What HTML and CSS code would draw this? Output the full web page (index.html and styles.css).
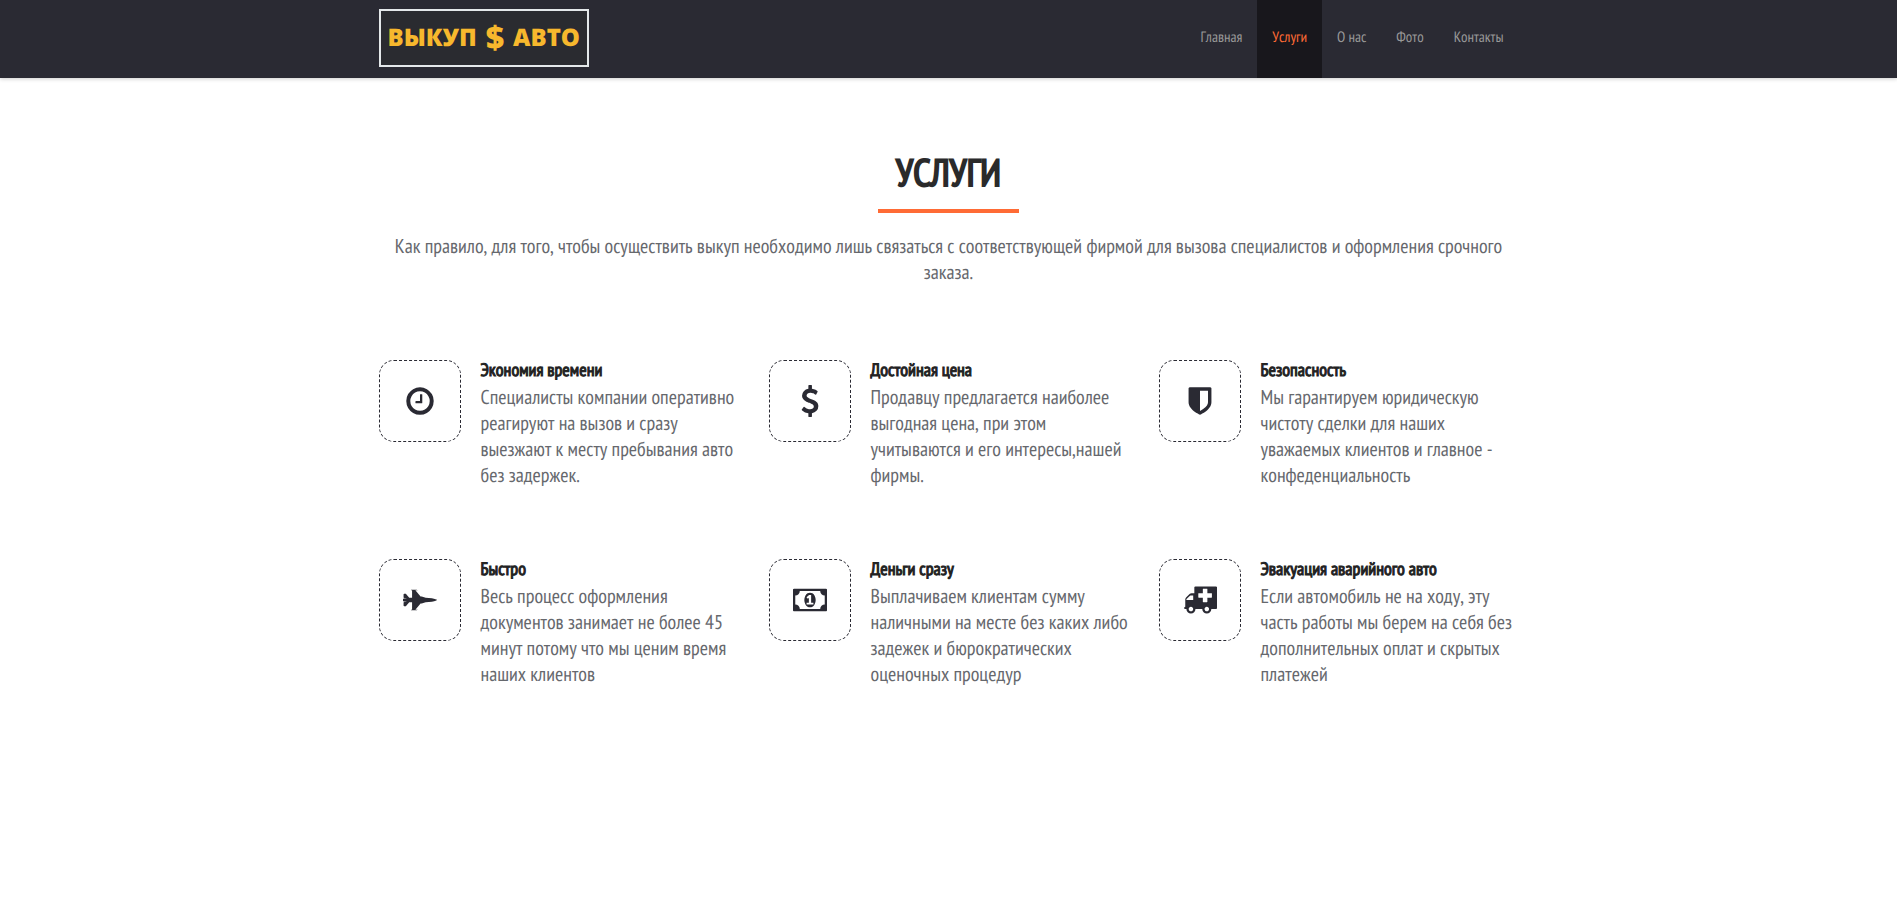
FILE: index.html
```html
<!DOCTYPE html>
<html lang="ru">
<head>
<meta charset="utf-8">
<meta name="viewport" content="width=device-width, initial-scale=1">
<title>Выкуп авто — Услуги</title>
<link rel="stylesheet" href="styles.css">
</head>
<body>
<header class="header">
  <div class="container header-inner">
    <a class="logo" href="#"><span>ВЫКУП</span><span class="logo-sign">$</span><span>АВТО</span></a>
    <nav class="nav">
      <a class="nav-link" href="#">Главная</a>
      <a class="nav-link active" href="#" aria-current="page">Услуги</a>
      <a class="nav-link" href="#">О нас</a>
      <a class="nav-link" href="#">Фото</a>
      <a class="nav-link" href="#">Контакты</a>
    </nav>
  </div>
</header>
<main class="container services">
  <h1 class="title">УСЛУГИ</h1>
  <p class="intro">Как правило, для того, чтобы осуществить выкуп необходимо лишь связаться с соответствующей фирмой для вызова специалистов и оформления срочного заказа.</p>
  <div class="grid">
    <article class="card">
      <div class="tile"><svg class="icon" viewBox="0 0 1792 1792" aria-hidden="true"><path d="M1024 544v448q0 14-9 23t-23 9h-320q-14 0-23-9t-9-23v-64q0-14 9-23t23-9h224v-352q0-14 9-23t23-9h64q14 0 23 9t9 23zm416 352q0-148-73-273t-198-198-273-73-273 73-198 198-73 273 73 273 198 198 273 73 273-73 198-198 73-273zm224 0q0 209-103 385.5t-279.5 279.5-385.5 103-385.5-103-279.5-279.5-103-385.5 103-385.5 279.5-279.5 385.5-103 385.5 103 279.5 279.5 103 385.5z"/></svg></div>
      <div class="card-body">
        <h2 class="card-title">Экономия времени</h2>
        <p class="card-text">Специалисты компании оперативно реагируют на вызов и сразу выезжают к месту пребывания авто без задержек.</p>
      </div>
    </article>
    <article class="card">
      <div class="tile"><svg class="icon" viewBox="0 0 1792 1792" aria-hidden="true"><path d="M1362 1185q0 153-99.5 263.5t-258.5 136.5v175q0 14-9 23t-23 9h-135q-13 0-22.5-9.5t-9.5-22.5v-175q-66-9-127.5-31t-101.5-44.5-74-48-46.5-37.5-17.5-18q-17-21-2-41l103-135q7-10 23-12 15-2 24 9l2 2q113 99 243 125 37 8 74 8 81 0 142.5-43t61.5-122q0-28-15-53t-33.5-42-58.5-37.5-66-32-80-32.5q-39-16-61.5-25t-61.5-26.5-62.5-31-56.5-35.5-53.5-42.5-43.5-49-35.5-58-21-66.5-8.5-78q0-138 98-242t255-134v-180q0-13 9.5-22.5t22.5-9.5h135q14 0 23 9t9 23v176q57 6 110.5 23t87 33.5 63.5 37.5 39 29 15 14q17 18 5 38l-81 146q-8 15-23 16-14 3-27-7-3-3-14.5-12t-39-26.5-58.5-32-74.5-26-85.5-11.5q-95 0-155 43t-60 111q0 26 8.5 48t29.5 41.5 39.5 33 56 31 60.5 27 70 27.5q53 20 81 31.5t76 35 75.5 42.5 62 50 53 63.5 31.5 76.5 13 94z"/></svg></div>
      <div class="card-body">
        <h2 class="card-title">Достойная цена</h2>
        <p class="card-text">Продавцу предлагается наиболее выгодная цена, при этом учитываются и его интересы,нашей фирмы.</p>
      </div>
    </article>
    <article class="card">
      <div class="tile"><svg class="icon" viewBox="0 0 1792 1792" aria-hidden="true"><path d="M1344 960v-640h-448v1137q119-63 213-137 235-184 235-360zm192-768v768q0 86-33.5 170.5t-83 150-118 127.5-126.5 103-121 77.5-89.5 49.5-42.5 20q-12 6-26 6t-26-6q-16-7-42.5-20t-89.5-49.5-121-77.5-126.5-103-118-127.5-83-150-33.5-170.5v-768q0-26 19-45t45-19h1152q26 0 45 19t19 45z"/></svg></div>
      <div class="card-body">
        <h2 class="card-title">Безопасность</h2>
        <p class="card-text">Мы гарантируем юридическую чистоту сделки для наших уважаемых клиентов и главное - конфеденциальность</p>
      </div>
    </article>
    <article class="card">
      <div class="tile"><svg class="icon icon-wide" viewBox="0 0 1920 1792" aria-hidden="true"><path d="M1920 896q-1 32-288 96l-352 32-224 64h-64l-293 352h69q26 0 45 4.5t19 11.5-19 11.5-45 4.5h-320v-32h64v-416h-160l-192 224h-96l-32-32v-192h32v-32h128v-8l-192-24v-128l192-24v-8h-128v-32h-32v-192l32-32h96l192 224h160v-416h-64v-32h320q26 0 45 4.5t19 11.5-19 11.5-45 4.5h-69l293 352h64l224 64 352 32q128 28 200 52t80 34z"/></svg></div>
      <div class="card-body">
        <h2 class="card-title">Быстро</h2>
        <p class="card-text">Весь процесс оформления документов занимает не более 45 минут потому что мы ценим время наших клиентов</p>
      </div>
    </article>
    <article class="card">
      <div class="tile"><svg class="icon icon-wide" viewBox="0 0 1920 1792" aria-hidden="true"><path d="M768 1152h384v-96h-128v-448h-114l-148 137 77 80q42-37 55-57h2v288h-128v96zm512-256q0 70-21 142t-59.5 134-101.5 101-138 39-138-39-101.5-101-59.5-134-21-142 21-142 59.5-134 101.5-101 138-39 138 39 101.5 101 59.5 134 21 142zm512 256v-512q-106 0-181-75t-75-181h-1152q0 106-75 181t-181 75v512q106 0 181 75t75 181h1152q0-106 75-181t181-75zm128-832v1152q0 26-19 45t-45 19h-1792q-26 0-45-19t-19-45v-1152q0-26 19-45t45-19h1792q26 0 45 19t19 45z"/></svg></div>
      <div class="card-body">
        <h2 class="card-title">Деньги сразу</h2>
        <p class="card-text">Выплачиваем клиентам сумму наличными на месте без каких либо задежек и бюрократических оценочных процедур</p>
      </div>
    </article>
    <article class="card">
      <div class="tile"><svg class="icon icon-wide" viewBox="0 0 1920 1792" aria-hidden="true"><path d="M576 1408q0-52-38-90t-90-38-90 38-38 90 38 90 90 38 90-38 38-90zM192 896h384v-256h-158q-14 2-22 9l-195 195q-7 12-9 22zM1472 1408q0-52-38-90t-90-38-90 38-38 90 38 90 90 38 90-38 38-90zM1632 736v-192q0-14-9-23t-23-9h-224v-224q0-14-9-23t-23-9h-192q-14 0-23 9t-9 23v224h-224q-14 0-23 9t-9 23v192q0 14 9 23t23 9h224v224q0 14 9 23t23 9h192q14 0 23-9t9-23v-224h224q14 0 23-9t9-23zM1920 192v1152q0 26-19 45t-45 19h-256q0 106-75 181t-181 75-181-75-75-181h-384q0 106-75 181t-181 75-181-75-75-181h-64q-26 0-45-19t-19-45 19-45 45-19v-416q0-26 13-58t32-51l198-198q19-19 51-32t58-13h160v-320q0-26 19-45t45-19h1152q26 0 45 19t19 45z"/></svg></div>
      <div class="card-body">
        <h2 class="card-title">Эвакуация аварийного авто</h2>
        <p class="card-text">Если автомобиль не на ходу, эту часть работы мы берем на себя без дополнительных оплат и скрытых платежей</p>
      </div>
    </article>
  </div>
</main>
</body>
</html>
```
FILE: styles.css
```css
* {
  box-sizing: border-box;
}

body {
  margin: 0;
  background: #fff;
  color: #66686d;
  font-family: "PT Sans Narrow", "Liberation Sans Narrow", "Noto Sans", sans-serif;
  font-size: 20px;
  font-kerning: none;
  line-height: 26px;
  text-rendering: geometricPrecision;
}

.container {
  max-width: 1170px;
  margin: 0 auto;
  padding: 0 15px;
}

.header {
  background: #2a2a33;
  box-shadow: 0 1px 4px rgba(0, 0, 0, 0.2);
}

.header-inner {
  display: flex;
  justify-content: space-between;
  align-items: flex-start;
}

.logo {
  display: flex;
  align-items: center;
  gap: 9px;
  height: 58px;
  margin-top: 9px;
  padding: 0 7px;
  border: 2px solid #e4e8ea;
  background: #2a2b30;
  color: #f7b82d;
  font-family: "Open Sans", "Noto Sans", sans-serif;
  font-size: 24px;
  font-weight: 800;
  text-decoration: none;
}

.logo-sign {
  font-size: 32px;
}

.nav {
  display: flex;
}

.nav-link {
  padding: 0 15px 2px;
  color: #999;
  font-size: 15px;
  line-height: 76px;
  text-decoration: none;
}

.nav-link.active {
  background: #18171c;
  color: #ff6b35;
}

.services {
  padding-top: 72px;
  padding-bottom: 60px;
}

.title {
  width: fit-content;
  margin: 0 auto 20px;
  padding: 0 18px 14px;
  border-bottom: 4px solid #ff6b35;
  color: #2a2a2b;
  font-size: 38px;
  font-weight: 400;
  line-height: 45px;
  text-align: center;
  -webkit-text-stroke: 2px currentColor;
}

.intro {
  margin: 0 0 75px;
  text-align: center;
}

.grid {
  display: grid;
  grid-template-columns: repeat(auto-fit, minmax(320px, 1fr));
  gap: 71px 30px;
}

.card {
  display: flex;
  align-items: flex-start;
  gap: 20px;
}

.tile {
  display: grid;
  flex: none;
  place-items: center;
  width: 82px;
  height: 82px;
  border: 1px dashed #2a2a33;
  border-radius: 15px;
}

.icon {
  width: 32px;
  height: 32px;
  fill: #2a2a33;
  fill-rule: evenodd;
}

.icon-wide {
  width: 34px;
}

.card-body {
  flex: 1;
  min-width: 0;
}

.card-title {
  margin: 0 0 4px;
  color: #222;
  font-size: 18px;
  font-weight: 400;
  line-height: 20px;
  -webkit-text-stroke: 1px currentColor;
}

.card-text {
  margin: 0;
}
```
